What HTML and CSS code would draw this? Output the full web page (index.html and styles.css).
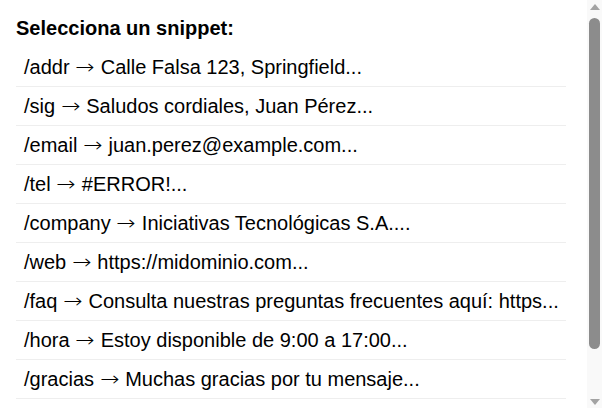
FILE: index.html
```html
<!DOCTYPE html>
<html lang="es">
<head>
<meta charset="utf-8">
<title>Snippets</title>
<link rel="stylesheet" href="styles.css">
</head>
<body>
<div class="picker">
  <div class="title">Selecciona un snippet:</div>
  <ul class="list">
    <li class="item">/addr <span class="arrow">→</span> Calle Falsa 123, Springfield...</li>
    <li class="item">/sig <span class="arrow">→</span> Saludos cordiales, Juan Pérez...</li>
    <li class="item">/email <span class="arrow">→</span> juan.perez@example.com...</li>
    <li class="item">/tel <span class="arrow">→</span> #ERROR!...</li>
    <li class="item">/company <span class="arrow">→</span> Iniciativas Tecnológicas S.A....</li>
    <li class="item">/web <span class="arrow">→</span> https://midominio.com...</li>
    <li class="item">/faq <span class="arrow">→</span> Consulta nuestras preguntas frecuentes aquí: https...</li>
    <li class="item">/hora <span class="arrow">→</span> Estoy disponible de 9:00 a 17:00...</li>
    <li class="item">/gracias <span class="arrow">→</span> Muchas gracias por tu mensaje...</li>
  </ul>
</div>
<div class="scrollbar" aria-hidden="true">
  <div class="sb-btn sb-up"></div>
  <div class="sb-track"><div class="sb-thumb"></div></div>
  <div class="sb-btn sb-down"></div>
</div>
</body>
</html>
```

FILE: styles.css
```css
html, body {
  margin: 0;
  padding: 0;
  background: #fff;
}
body {
  font-family: "Liberation Sans", Arial, sans-serif;
  color: #000;
}
.picker {
  width: 550px;
  padding: 18px 16px 65px 16px;
}
.title {
  font-size: 20px;
  font-weight: bold;
  line-height: 20px;
  margin-bottom: 10px;
}
.list {
  list-style: none;
  margin: 0;
  padding: 0;
}
.item {
  font-size: 20px;
  line-height: 20px;
  padding: 9px 8px;
  border-bottom: 1px solid #eeeeee;
  white-space: nowrap;
}
.arrow {
  display: inline-block;
  width: 20px;
  text-align: center;
  font-family: "DejaVu Sans", sans-serif;
  font-weight: 200;
  font-size: 20px;
  line-height: 0;
  transform: scaleX(1.15);
}
.scrollbar {
  position: fixed;
  top: 0;
  right: 0;
  width: 15px;
  height: 100%;
  background: #f9f9f9;
  display: flex;
  flex-direction: column;
}
.sb-btn {
  height: 15px;
  display: flex;
  justify-content: center;
  align-items: center;
}
.sb-up::before {
  content: "";
  border-left: 5px solid transparent;
  border-right: 5px solid transparent;
  border-bottom: 6px solid #a3a3a3;
  margin-top: -2px;
}
.sb-down::before {
  content: "";
  border-left: 5px solid transparent;
  border-right: 5px solid transparent;
  border-top: 6px solid #a3a3a3;
  margin-top: 2px;
}
.sb-track {
  flex: 1;
  padding: 3px 2px 0 2px;
}
.sb-thumb {
  height: 331px;
  background: #8c8c8c;
  border-radius: 6px;
}
```
